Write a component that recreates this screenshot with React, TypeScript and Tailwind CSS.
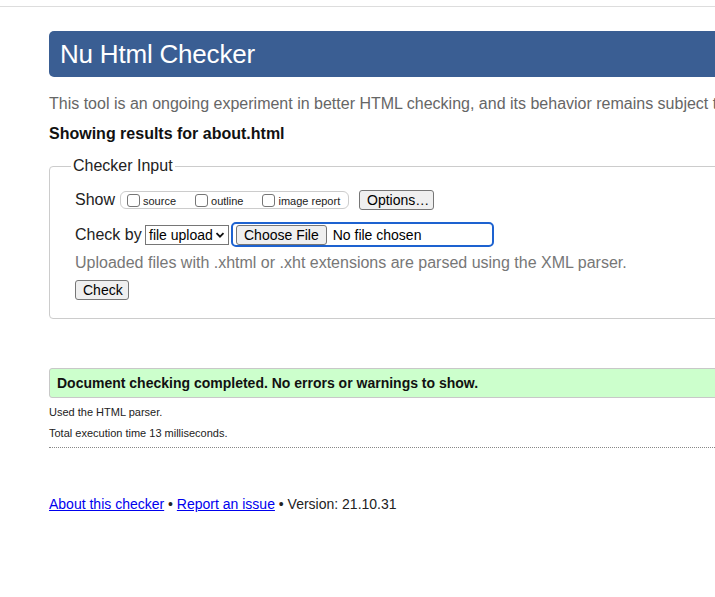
import React from 'react'

// small pieces

const Checkbox = ({ label }: { label: string }) => (
    <label className="flex items-center">
        <span className="w-[13px] h-[13px] border border-[#767676] rounded-[3px] bg-white" />
        <span className="ml-[3px] mt-[2px] text-[11px] leading-[13px] text-[#222]">{label}</span>
    </label>
)

const Button = ({ children, className }: { children: React.ReactNode, className?: string }) => (
    <button className={"whitespace-nowrap border border-[#767676] rounded-[3px] bg-[#efefef] text-[14px] leading-[16px] text-black px-[7px] h-[20px] " + (className ?? '')}>
        {children}
    </button>
)

const App = () => {
    return (
        <div className="w-[715px] h-[597px] overflow-hidden bg-white font-['Liberation_Sans',Arial,sans-serif] text-[#222]">
            <div className="mt-[6px] border-t border-[#dddddd]" />

            <div className="ml-[49px] w-[760px]">
                {/* header */}
                <h1 className="mt-[24px] h-[46px] rounded-[5px] bg-[#3a5e93] pl-[11px] flex items-center text-[26px] text-white tracking-[-0.2px]">
                    Nu Html Checker
                </h1>

                <p className="mt-[18px] text-[16px] leading-[18px] text-[#666] whitespace-nowrap">
                    This tool is an ongoing experiment in better HTML checking, and its behavior remains subject to change
                </p>

                <p className="mt-[12px] text-[16px] leading-[18px] font-bold text-[#111]">
                    Showing results for about.html
                </p>

                {/* checker input */}
                <fieldset className="mt-[14px] border border-[#cccccc] rounded-[4px] pl-[25px] pt-[15px] pb-[16px]">
                    <legend className="px-[2px] ml-[-4px] text-[16px] leading-[18px] text-[#222]">Checker Input</legend>

                    <div className="flex items-center h-[20px]">
                        <span className="text-[16px] leading-[18px] w-[45px]">Show</span>
                        <div className="flex items-center h-[18px] w-[229px] border border-[#cccccc] rounded-[6px] pl-[6px] gap-[19px]">
                            <Checkbox label="source" />
                            <Checkbox label="outline" />
                            <Checkbox label="image report" />
                        </div>
                        <Button className="ml-[10px] w-[75px]">Options…</Button>
                    </div>

                    <div className="flex items-center mt-[12px] h-[25px]">
                        <span className="text-[16px] leading-[18px] w-[70px]">Check by</span>
                        <span className="flex items-center justify-between w-[84px] h-[20px] border border-[#767676] bg-white pl-[3px] pr-[3px] text-[14px] leading-[16px] text-black">
                            file upload
                            <svg width="10" height="10" viewBox="0 0 10 10" className="ml-[2px]">
                                <path d="M1.5 3.2 L5 6.7 L8.5 3.2" fill="none" stroke="#111" strokeWidth="1.8" />
                            </svg>
                        </span>
                        <div className="ml-[2px] flex items-center w-[263px] h-[25px] border-2 border-[#1d62d0] rounded-[5px] pl-[3px]">
                            <Button className="h-[18px] px-[4px]">Choose File</Button>
                            <span className="ml-[6px] text-[14px] leading-[16px] text-black whitespace-nowrap">No file chosen</span>
                        </div>
                    </div>

                    <p className="mt-[7px] text-[16px] leading-[18px] text-[#777]">
                        Uploaded files with .xhtml or .xht extensions are parsed using the XML parser.
                    </p>

                    <Button className="mt-[8px] w-[54px] px-[6px]">Check</Button>
                </fieldset>

                {/* results */}
                <div className="mt-[49px] h-[30px] flex items-center border border-[#c8c8c8] rounded-[3px] bg-[#ccffcc] pl-[7px]">
                    <span className="text-[14px] leading-[16px] font-bold text-[#111]">
                        Document checking completed. No errors or warnings to show.
                    </span>
                </div>

                <p className="mt-[7px] text-[11px] leading-[14px] text-[#222]">Used the HTML parser.</p>
                <p className="mt-[7px] text-[11px] leading-[14px] text-[#222]">Total execution time 13 milliseconds.</p>
                <div className="mt-[7px] border-t border-dotted border-[#888]" />

                {/* footer */}
                <p className="mt-[48px] text-[14px] leading-[16px] text-[#222]">
                    <a href="#" className="text-[#0000ee] underline">About this checker</a>
                    {' • '}
                    <a href="#" className="text-[#0000ee] underline">Report an issue</a>
                    {' • Version: 21.10.31'}
                </p>
            </div>
        </div>
    )
}

export default App
